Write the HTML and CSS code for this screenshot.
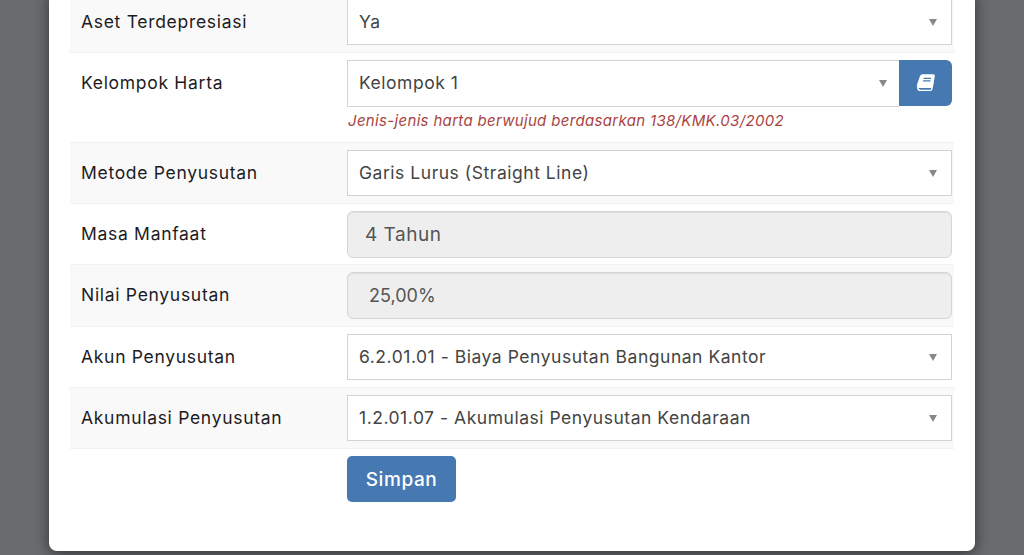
FILE: index.html
```html
<!DOCTYPE html>
<html lang="id">
<head>
<meta charset="utf-8">
<title>Aset</title>
<link rel="stylesheet" href="styles.css">
</head>
<body>
<div class="modal">
  <form class="form">
    <div class="row striped">
      <label class="label">Aset Terdepresiasi</label>
      <div class="field"><div class="select"><span class="value">Ya</span><i class="caret"></i></div></div>
    </div>
    <div class="row">
      <label class="label">Kelompok Harta</label>
      <div class="field">
        <div class="group">
          <div class="select joined"><span class="value">Kelompok 1</span><i class="caret"></i></div>
          <button type="button" class="addon" aria-label="Buku">
            <svg width="20" height="18" viewBox="0 0 20 18" fill="none" stroke="#fff" stroke-width="1.4" stroke-linejoin="round" stroke-linecap="round"><path d="M6.500 1h10.600c.7 0 1.100.5 1 1.100l-1.900 10.100c-.1.600-.6 1-1.200 1H3.400c-1.200 0-2-1-1.800-2.100L4.600 2.600C4.800 1.700 5.600 1 6.500 1z" fill="#fff"/><path d="M1.700 13.400c.2 1.900 1 3 2.500 3h10.200c.8 0 1.300-.5 1.400-1.200l1.300-7.200"/><path d="M8 4.300h6.500M7.500 6.900h6.500" stroke="#4679b2" stroke-width="1.300"/></svg>
          </button>
        </div>
        <p class="help">Jenis-jenis harta berwujud berdasarkan 138/KMK.03/2002</p>
      </div>
    </div>
    <div class="row striped">
      <label class="label">Metode Penyusutan</label>
      <div class="field"><div class="select"><span class="value">Garis Lurus (Straight Line)</span><i class="caret"></i></div></div>
    </div>
    <div class="row tight">
      <label class="label">Masa Manfaat</label>
      <div class="field"><div class="readonly">4 Tahun</div></div>
    </div>
    <div class="row striped">
      <label class="label">Nilai Penyusutan</label>
      <div class="field"><div class="readonly indented">25,00%</div></div>
    </div>
    <div class="row">
      <label class="label">Akun Penyusutan</label>
      <div class="field"><div class="select"><span class="value">6.2.01.01 - Biaya Penyusutan Bangunan Kantor</span><i class="caret"></i></div></div>
    </div>
    <div class="row striped">
      <label class="label">Akumulasi Penyusutan</label>
      <div class="field"><div class="select"><span class="value">1.2.01.07 - Akumulasi Penyusutan Kendaraan</span><i class="caret"></i></div></div>
    </div>
    <div class="actions"><button type="button" class="save">Simpan</button></div>
  </form>
</div>
</body>
</html>
```
FILE: styles.css
```css
* { box-sizing: border-box; }
html, body { height: 100%; }
body {
  margin: 0;
  height: 555px;
  overflow: hidden;
  background: #6b6c6e;
  font-family: Inter, "Noto Sans", sans-serif;
}
.modal {
  width: 926px;
  height: 559px;
  margin: -8px 0 0 49px;
  padding: 0 21px;
  background: #fff;
  border-radius: 0 0 8px 8px;
  box-shadow: 0 3px 16px rgba(0, 0, 0, .55);
}
.form { width: 884px; }
.row {
  display: flex;
  border-bottom: 1px solid #f1f1f2;
  padding: 7px 2px 7px 0;
}
.tight { padding-bottom: 6px; }
.striped { background: #f9f9f9; }
.label {
  width: 277px;
  flex: none;
  padding: 12px 0 0 11px;
  font-size: 17.500px;
  font-weight: 400;
  line-height: 22px;
  letter-spacing: .7px;
  color: #1c1c1f;
}
.field { flex: 1; min-width: 0; }
.select {
  display: flex;
  align-items: center;
  justify-content: space-between;
  height: 46px;
  padding: 0 14px 2px 11px;
  background: #fff;
  border: 1px solid #d3d3d5;
  color: #444;
  font-size: 17.500px;
}
.value { letter-spacing: .53px; }
.caret {
  width: 0;
  height: 0;
  margin-top: 2px;
  border-left: 4.500px solid transparent;
  border-right: 4.500px solid transparent;
  border-top: 7px solid #888;
}
.group { display: flex; }
.joined { flex: 1; border-right: 0; height: 47px; padding-right: 12px; }
.addon {
  width: 53px;
  height: 46px;
  flex: none;
  display: flex;
  align-items: center;
  justify-content: center;
  padding: 0;
  background: #4679b2;
  border: 0;
  border-radius: 0 6px 6px 0;
}
.help {
  margin: 4px 0 0;
  height: 24px;
  padding-left: 1px;
  font-size: 15px;
  line-height: 20px;
  letter-spacing: .33px;
  font-style: italic;
  color: #a94442;
}
.readonly {
  height: 47px;
  padding: 0 17px 1px;
  display: flex;
  align-items: center;
  background: #eeeeee;
  border: 1px solid #d6d6d8;
  border-radius: 6px;
  box-shadow: inset 0 1px 1px rgba(0, 0, 0, .075);
  color: #555;
  font-size: 19px;
  letter-spacing: .5px;
}
.indented { padding-left: 21px; font-size: 18px; letter-spacing: 0; }
.actions { padding: 7px 0 0 277px; }
.save {
  width: 109px;
  height: 46px;
  background: #4679b2;
  border: 0;
  border-radius: 5px;
  color: #fff;
  font: 500 19px Inter, "Noto Sans", sans-serif;
  letter-spacing: .6px;
}
```
